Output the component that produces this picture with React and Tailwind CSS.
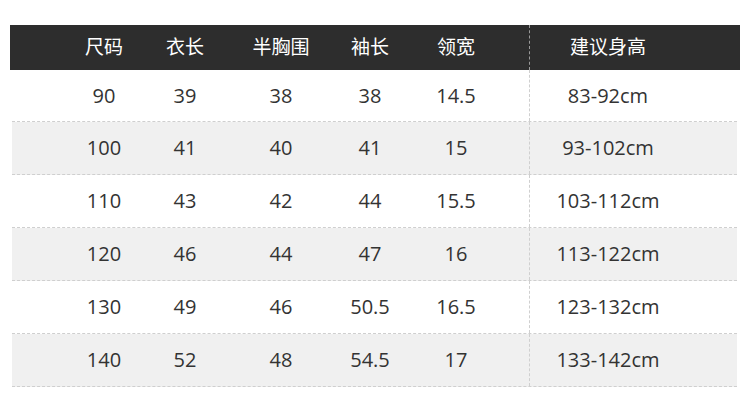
const head = ['尺码', '衣长', '半胸围', '袖长', '领宽']

const rows = [
  ['90', '39', '38', '38', '14.5', '83-92cm'],
  ['100', '41', '40', '41', '15', '93-102cm'],
  ['110', '43', '42', '44', '15.5', '103-112cm'],
  ['120', '46', '44', '47', '16', '113-122cm'],
  ['130', '49', '46', '50.5', '16.5', '123-132cm'],
  ['140', '52', '48', '54.5', '17', '133-142cm'],
]

// column widths tuned so the centres sit where the picture has them
const widths = ['w-[78px]', 'w-[84px]', 'w-[108px]', 'w-[70px]', 'w-[102px]']

function App() {
  return (
    <div
      className="w-[750px] h-[402px] bg-white pt-[25px] text-[#333]"
      style={{ fontFamily: '"Open Sans", "Noto Sans CJK SC", sans-serif' }}
    >
      {/* Header */}
      <div className="mx-[10px] h-[45px] bg-[#2d2d2d] flex items-stretch pl-[55px] text-white text-[19px]">
        {head.map((h, i) => (
          <div key={h} className={`${widths[i]} flex items-center justify-center`}>{h}</div>
        ))}
        <div className="w-[22px]" />
        <div className="border-l border-dashed border-[#9a9a9a] flex items-center">
          <div className="w-[156px] text-center">建议身高</div>
        </div>
      </div>

      {/* Body */}
      <div className="mx-[12px] w-[725px]">
        {rows.map((r, ri) => (
          <div
            key={r[0]}
            className={`flex items-stretch pl-[53px] border-b border-dashed border-[#cfcfcf] text-[20px] ${
              ri % 2 === 1 ? 'bg-[#f0f0f0]' : 'bg-white'
            } ${ri === 0 ? 'h-[52px]' : 'h-[53px]'}`}
          >
            {r.slice(0, 5).map((c, i) => (
              <div key={i} className={`${widths[i]} flex items-center justify-center`}>{c}</div>
            ))}
            <div className="w-[22px]" />
            <div className="border-l border-dashed border-[#cfcfcf] flex items-center">
              <div className="w-[156px] text-center">{r[5]}</div>
            </div>
          </div>
        ))}
      </div>
    </div>
  )
}

export default App
